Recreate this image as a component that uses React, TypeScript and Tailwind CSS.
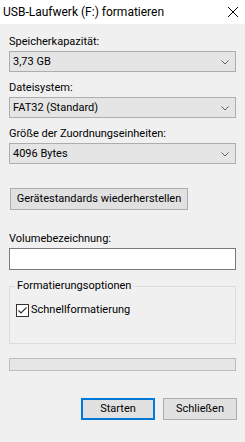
import React from "react";

const font = { fontFamily: 'Roboto, "Noto Sans", sans-serif' };

function Chevron() {
  return (
    <svg width="8" height="5" viewBox="0 0 8 5" className="absolute right-[6px] top-[8px]">
      <path d="M0.5 0.5 L4 4 L7.5 0.5" fill="none" stroke="#606060" strokeWidth="1" />
    </svg>
  );
}

function Combo({ value }: { value: string }) {
  return (
    <div className="relative mx-[9px] h-[21px] border border-[#adadad] bg-[#e5e5e5] pl-[3px] text-[11px] leading-[19px] text-black">
      {value}
      <Chevron />
    </div>
  );
}

function Label({ children }: { children: React.ReactNode }) {
  return <div className="mx-[9px] h-[17px] whitespace-nowrap text-[11px] leading-[16px] text-black">{children}</div>;
}

export default function App() {
  return (
    <div className="flex h-[442px] w-[245px] flex-col bg-[#f0f0f0]" style={font}>
      <div className="relative flex h-[24px] shrink-0 items-center bg-white pl-[3px] text-[12px] text-black">
        USB-Laufwerk (F:) formatieren
        <svg width="10" height="10" viewBox="0 0 10 10" className="absolute right-[7px] top-[7px]">
          <path d="M0 0 L10 10 M10 0 L0 10" stroke="#000" strokeWidth="1" />
        </svg>
      </div>
      <div className="mt-[10px]">
        <Label>Speicherkapazität:</Label>
        <Combo value="3,73 GB" />
      </div>
      <div className="mt-[8px]">
        <Label>Dateisystem:</Label>
        <Combo value="FAT32 (Standard)" />
      </div>
      <div className="mt-[8px]">
        <Label>Größe der Zuordnungseinheiten:</Label>
        <Combo value="4096 Bytes" />
      </div>
      <div className="mt-[24px] ml-[10px] flex h-[22px] w-[178px] items-center justify-center whitespace-nowrap border border-[#adadad] bg-[#e1e1e1] text-[11px] text-black">
        Gerätestandards wiederherstellen
      </div>
      <div className="mt-[21px]">
        <Label>Volumebezeichnung:</Label>
        <div className="mx-[9px] h-[22px] border border-[#7a7a7a] bg-white" />
      </div>
      <div className="relative mx-[9px] mt-[16px] h-[58px] border border-[#dcdcdc]">
        <div className="absolute left-[5px] top-[-9px] whitespace-nowrap bg-[#f0f0f0] px-[2px] text-[11px] leading-[16px] text-black">
          Formatierungsoptionen
        </div>
        <div className="mt-[15px] ml-[6px] flex items-center gap-[2px] text-[11px] leading-[16px] text-black">
          <div className="flex h-[13px] w-[13px] items-center justify-center border border-[#333] bg-white">
            <svg width="11" height="11" viewBox="0 0 11 11">
              <path d="M1.5 5.5 L4 8 L9.5 2.5" fill="none" stroke="#333" strokeWidth="1.2" />
            </svg>
          </div>
          Schnellformatierung
        </div>
      </div>
      <div className="mx-[9px] mt-[14px] h-[13px] border border-[#bcbcbc] bg-[#e6e6e6]" />
      <div className="mt-[27px] flex justify-end gap-[8px] pr-[8px]">
        <div className="flex h-[22px] w-[74px] items-center justify-center border-2 border-[#0078d7] bg-[#e1e1e1] text-[11px] text-black">
          Starten
        </div>
        <div className="flex h-[22px] w-[74px] items-center justify-center border border-[#adadad] bg-[#e1e1e1] text-[11px] text-black">
          Schließen
        </div>
      </div>
    </div>
  );
}
